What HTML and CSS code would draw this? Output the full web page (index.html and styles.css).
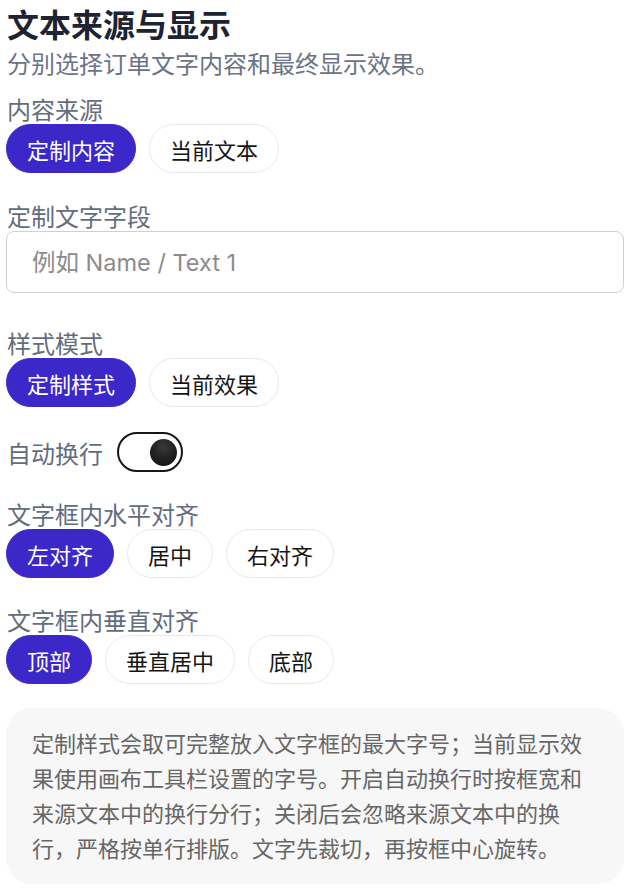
FILE: index.html
```html
<!DOCTYPE html>
<html lang="zh-CN">
<head>
<meta charset="utf-8">
<title>文本来源与显示</title>
<link rel="stylesheet" href="styles.css">
</head>
<body>
<div class="panel">
  <header class="header">
    <h1 class="title">文本来源与显示</h1>
    <p class="subtitle">分别选择订单文字内容和最终显示效果。</p>
  </header>

  <section class="field field-first">
    <div class="label">内容来源</div>
    <div class="pills">
      <button class="pill active">定制内容</button>
      <button class="pill">当前文本</button>
    </div>
  </section>

  <section class="field field-input">
    <div class="label">定制文字字段</div>
    <input class="text-input" type="text" placeholder="例如 Name / Text 1">
  </section>

  <section class="field">
    <div class="label">样式模式</div>
    <div class="pills">
      <button class="pill active">定制样式</button>
      <button class="pill">当前效果</button>
    </div>
  </section>

  <section class="field toggle-row">
    <span class="label">自动换行</span>
    <span class="toggle"><span class="knob"></span></span>
  </section>

  <section class="field">
    <div class="label">文字框内水平对齐</div>
    <div class="pills">
      <button class="pill active">左对齐</button>
      <button class="pill">居中</button>
      <button class="pill">右对齐</button>
    </div>
  </section>

  <section class="field">
    <div class="label">文字框内垂直对齐</div>
    <div class="pills">
      <button class="pill active">顶部</button>
      <button class="pill">垂直居中</button>
      <button class="pill">底部</button>
    </div>
  </section>

  <section class="field note">定制样式会取可完整放入文字框的最大字号；当前显示效果使用画布工具栏设置的字号。开启自动换行时按框宽和来源文本中的换行分行；关闭后会忽略来源文本中的换行，严格按单行排版。文字先裁切，再按框中心旋转。</section>
</div>
</body>
</html>
```

FILE: styles.css
```css
* {
  box-sizing: border-box;
}

html, body {
  margin: 0;
  padding: 0;
  background: #ffffff;
}

body {
  font-family: "Noto Sans CJK SC", "Noto Sans", sans-serif;
}

.panel {
  display: flex;
  flex-direction: column;
  padding: 4px 8px 0 6px;
}

.header {
  display: flex;
  flex-direction: column;
  gap: 5px;
}

.title {
  margin: 0;
  padding-left: 1px;
  font-size: 32px;
  line-height: 38px;
  font-weight: 700;
  color: #1e2331;
}

.subtitle {
  margin: 0;
  padding-left: 1px;
  font-size: 24px;
  line-height: 32px;
  color: #6b7384;
}

.field {
  margin-top: 26px;
}

.field-first {
  margin-top: 14px;
}

.field-input {
  margin-top: 27px;
  margin-bottom: 8px;
}

.label {
  padding-left: 1px;
  font-size: 24px;
  line-height: 31px;
  color: #636d7e;
}

.pills {
  display: flex;
  gap: 13px;
}

.pill {
  height: 49px;
  padding: 0 20px;
  border: 1.5px solid #e9e9ec;
  border-radius: 25px;
  background: #ffffff;
  color: #151515;
  font-family: "Noto Sans CJK SC", sans-serif;
  font-size: 22px;
  line-height: 1;
  display: inline-flex;
  align-items: center;
  justify-content: center;
}

.pill.active {
  background: #3c28c8;
  border-color: #3c28c8;
  color: #ffffff;
}

.text-input {
  display: block;
  width: 100%;
  height: 62px;
  padding: 0 25px;
  border: 1.5px solid #cfcfcf;
  border-radius: 8px;
  font-family: "Inter", "Noto Sans CJK SC", sans-serif;
  font-size: 23.5px;
  color: #222;
  background: #fff;
  outline: none;
}

.text-input::placeholder {
  color: #8b8b8b;
}

.toggle-row {
  margin-top: 25px;
  display: flex;
  align-items: center;
  gap: 14px;
  height: 40px;
}

.toggle {
  width: 66px;
  height: 40px;
  border: 2.5px solid #161616;
  border-radius: 20px;
  background: #ffffff;
  display: flex;
  align-items: center;
  justify-content: flex-end;
  padding-right: 4px;
}

.knob {
  width: 27px;
  height: 27px;
  border-radius: 50%;
  background: radial-gradient(circle at 50% 30%, #3a3a3a 0%, #1e1e1e 55%, #111 100%);
}

.note {
  margin-top: 24px;
  padding: 17px 30px 19px 26px;
  background: #f7f7f7;
  border-radius: 26px;
  font-size: 22px;
  line-height: 35px;
  color: #666666;
}
```
